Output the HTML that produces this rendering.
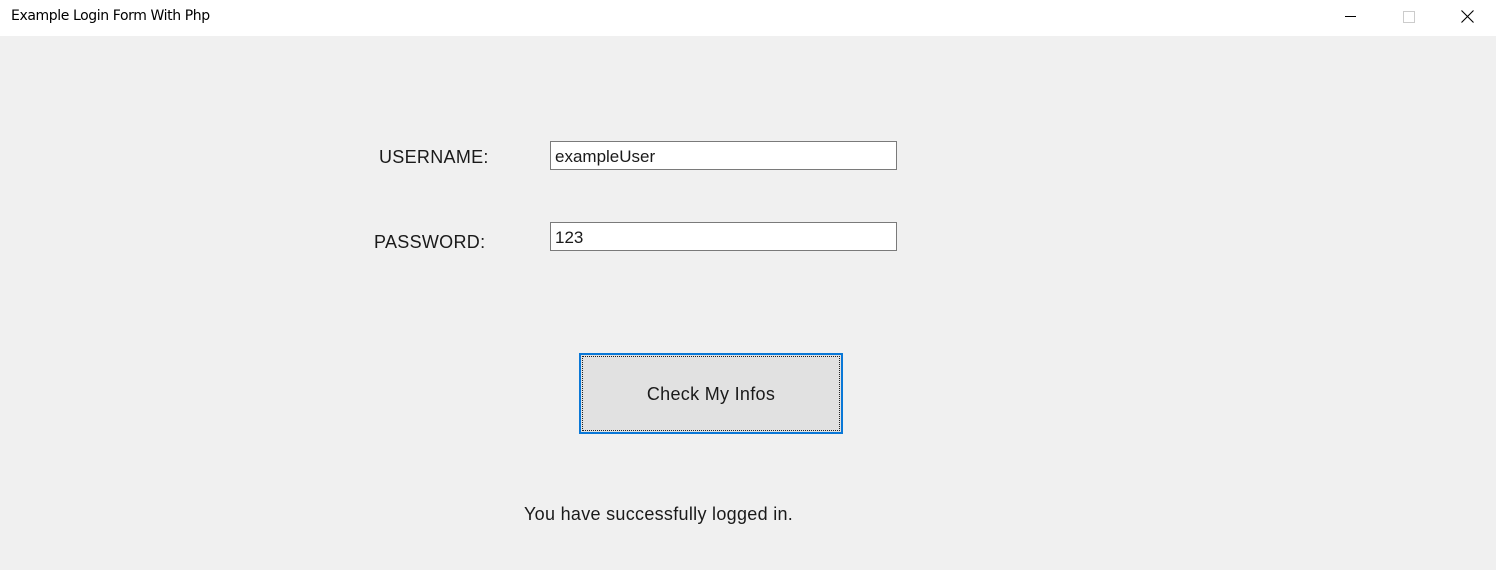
<!DOCTYPE html>
<html><head><style>
body{margin:0;width:1496px;height:570px;background:#f0f0f0;position:relative;overflow:hidden;font-family:"Liberation Sans",Arial,sans-serif;color:#1a1a1a}
.t{position:absolute;left:0;top:0;width:1496px;height:36px;background:#fff}
.tt{position:absolute;left:11px;top:8px;font-size:14px;font-family:"DejaVu Sans","Liberation Sans",sans-serif;letter-spacing:-0.4px;color:#000}
.l{position:absolute;font-size:18px;white-space:nowrap;letter-spacing:0.3px}
.in{position:absolute;left:550px;width:345px;height:27px;background:#fff;border:1px solid #7a7a7a}
.in span{position:absolute;left:4px;top:5px;font-size:17px}
.b{position:absolute;left:579px;top:353px;width:260px;height:77px;border:2px solid #0a78d7;background:#e1e1e1}
.b div{position:absolute;inset:1px;border:1px dotted #222}
.b span{position:absolute;left:0;right:0;top:29px;text-align:center;font-size:18px;letter-spacing:0.3px}
</style></head><body>
<div class="t"><div class="tt">Example Login Form With Php</div>
<div style="position:absolute;left:1345px;top:16px;width:11px;height:1px;background:#000"></div>
<div style="position:absolute;left:1403px;top:11px;width:10px;height:10px;border:1px solid #ccc"></div>
<svg style="position:absolute;left:1461px;top:10px" width="13" height="13"><path d="M0.5 0.5L12.5 12.5M12.5 0.5L0.5 12.5" stroke="#000" stroke-width="1.1"/></svg>
</div>
<div class="l" style="left:379px;top:147px">USERNAME:</div>
<div class="l" style="left:374px;top:232px">PASSWORD:</div>
<div class="in" style="top:141px"><span>exampleUser</span></div>
<div class="in" style="top:222px"><span>123</span></div>
<div class="b"><div></div><span>Check My Infos</span></div>
<div class="l" style="left:524px;top:504px">You have successfully logged in.</div>
</body></html>
